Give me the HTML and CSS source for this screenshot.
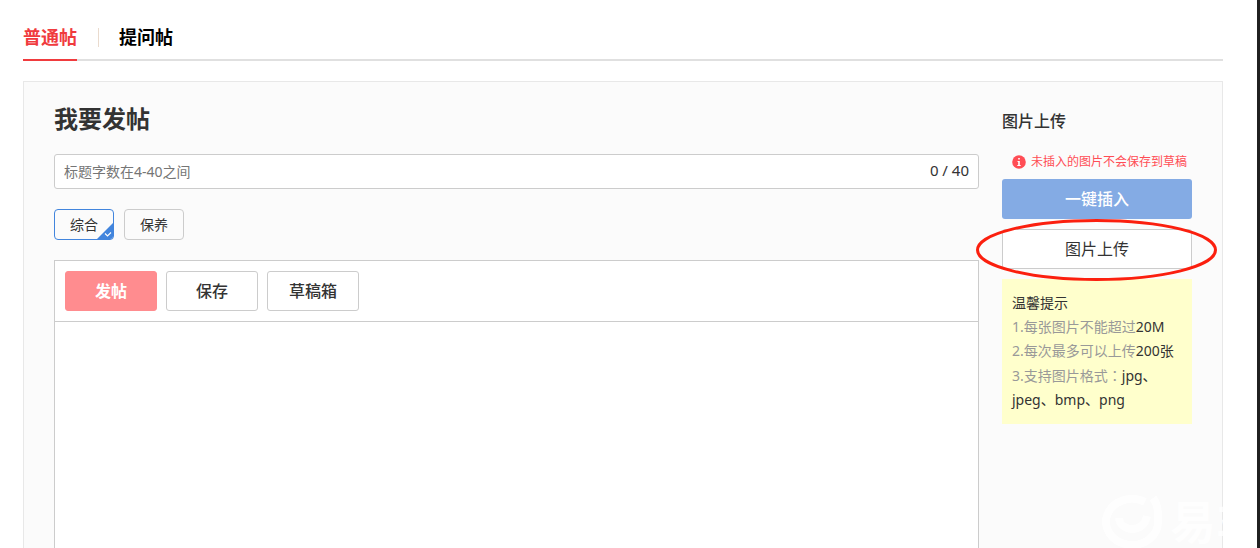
FILE: index.html
```html
<!DOCTYPE html>
<html lang="zh-CN">
<head>
<meta charset="utf-8">
<title>我要发帖</title>
<link rel="stylesheet" href="styles.css">
</head>
<body>
<div class="page">
  <nav class="tabs">
    <a class="tab tab-active" href="#post">普通帖</a>
    <span class="tab-divider"></span>
    <a class="tab" href="#question">提问帖</a>
  </nav>
  <main class="panel" id="post">
    <section class="compose">
      <h1 class="compose-title">我要发帖</h1>
      <div class="title-field">
        <input class="title-input" type="text" maxlength="40" aria-label="标题" placeholder="标题字数在4-40之间">
        <span class="title-count">0 / 40</span>
      </div>
      <div class="tags">
        <button class="tag tag-selected" type="button" aria-pressed="true">综合
          <svg class="tag-check" viewBox="0 0 18 18" aria-hidden="true"><path d="M18 0V18H0Z" fill="#4285dd"/><path d="M9 11.500L11.500 14L15 10.500" fill="none" stroke="#fff" stroke-width="1.100"/></svg>
        </button>
        <button class="tag" type="button" aria-pressed="false">保养</button>
      </div>
      <div class="editor">
        <div class="toolbar">
          <button class="action action-primary" type="button">发帖</button>
          <button class="action" type="button">保存</button>
          <button class="action" type="button">草稿箱</button>
        </div>
        <textarea class="editor-body" aria-label="正文"></textarea>
      </div>
    </section>
    <aside class="upload">
      <h2 class="upload-title">图片上传</h2>
      <p class="notice">
        <svg class="notice-icon" viewBox="0 0 14 14" aria-hidden="true"><circle cx="7" cy="7" r="6.800" fill="#ff4d55"/><path d="M6.200 3H7.800V4.600H6.200ZM5.500 6H7.800V10H8.700V11H5.300V10H6.200V7H5.500Z" fill="#fff"/></svg>
        <span>未插入的图片不会保存到草稿</span>
      </p>
      <button class="wide-button insert-button" type="button">一键插入</button>
      <div class="upload-wrap">
        <button class="wide-button upload-button" type="button">图片上传</button>
        <svg class="highlight" viewBox="0 0 241 62" aria-hidden="true"><ellipse cx="120.500" cy="31" rx="119" ry="29.500" fill="none" stroke="#fb1f0e" stroke-width="3"/></svg>
      </div>
      <div class="tips">
        <strong class="tips-title">温馨提示</strong>
        <ol class="tips-list">
          <li>1.每张图片不能超过<em>20M</em></li>
          <li>2.每次最多可以上传<em>200张</em></li>
          <li>3.支持图片格式<span class="colon" lang="zh-TW">：</span><em>jpg、jpeg、bmp、png</em></li>
        </ol>
      </div>
    </aside>
  </main>
  <div class="watermark" aria-hidden="true">
    <svg class="watermark-logo" viewBox="0 0 62 54"><path d="M43 8A26 23 0 1 0 56 27Q57 12 51 4" fill="none" stroke="#fff" stroke-width="8"/><path d="M17 24C18 38 42 40 45 22" fill="none" stroke="#fff" stroke-width="8"/></svg>
    <span class="watermark-text">易车</span>
  </div>
</div>
</body>
</html>
```
FILE: styles.css
```css
* {
  box-sizing: border-box;
}

body {
  margin: 0;
  font-family: "Noto Sans", "Noto Sans CJK SC", sans-serif;
  font-size: 14px;
  line-height: 24px;
  color: #333;
  background: #fff;
}

button,
input,
textarea {
  font: inherit;
  color: inherit;
}

button {
  padding: 0;
  cursor: pointer;
}

.page {
  position: relative;
  display: flex;
  flex-direction: column;
  height: 100vh;
  padding: 14px 34px 0 23px;
  overflow: hidden;
  border-right: 3px solid #202020;
}

.tabs {
  display: flex;
  align-items: flex-start;
  height: 47px;
  border-bottom: 2px solid #e0e0e0;
}

.tab {
  height: 47px;
  font-size: 18px;
  font-weight: 700;
  line-height: 46px;
  color: #000;
  text-decoration: none;
}

.tab-active {
  color: #f03b3e;
  border-bottom: 2px solid #f03b3e;
}

.tab-divider {
  width: 1px;
  height: 19px;
  margin: 14px 20px 0 21px;
  background: #eadbce;
}

.panel {
  display: flex;
  flex: 1;
  gap: 23px;
  min-height: 0;
  margin-top: 20px;
  padding: 0 30px;
  background: #fbfbfb;
  border: 1px solid #e8e8e8;
  border-bottom: 0;
}

.compose {
  display: flex;
  flex: 1;
  flex-direction: column;
  min-width: 0;
}

.compose-title {
  margin: 19px 0 17px;
  font-size: 24px;
  line-height: 36px;
}

.title-field {
  display: flex;
  flex: none;
  align-items: center;
  height: 35px;
  padding: 0 9px;
  background: #fff;
  border: 1px solid #ccc;
  border-radius: 3px;
}

.title-input {
  flex: 1;
  min-width: 0;
  padding: 0;
  background: none;
  border: 0;
  outline: 0;
}

.title-input::placeholder {
  color: #757575;
}

.title-count {
  padding-bottom: 3px;
  font-size: 15px;
}

.tags {
  display: flex;
  gap: 10px;
  margin: 20px 0;
}

.tag {
  position: relative;
  width: 60px;
  height: 31px;
  background: #fbfbfb;
  border: 1px solid #ccc;
  border-radius: 4px;
}

.tag-selected {
  overflow: hidden;
  border-color: #4285dd;
}

.tag-check {
  position: absolute;
  right: -1px;
  bottom: -1px;
  width: 18px;
  height: 18px;
}

.editor {
  display: flex;
  flex: 1;
  flex-direction: column;
  background: #fff;
  border: 1px solid #ccc;
  border-bottom: 0;
}

.toolbar {
  display: flex;
  gap: 9px;
  padding: 10px;
  border-bottom: 1px solid #ccc;
}

.action {
  width: 92px;
  height: 40px;
  font-size: 16px;
  font-weight: 500;
  background: #fff;
  border: 1px solid #ccc;
  border-radius: 3px;
}

.action-primary {
  font-weight: 700;
  color: #fff;
  background: #ff8c8f;
  border-color: #ff8c8f;
}

.editor-body {
  flex: 1;
  padding: 10px;
  resize: none;
  background: none;
  border: 0;
  outline: 0;
}

.upload {
  width: 190px;
}

.upload-title {
  margin: 27px 0 17px;
  font-size: 16px;
  font-weight: 500;
  line-height: 24px;
}

.notice {
  display: flex;
  gap: 5px;
  align-items: center;
  justify-content: flex-end;
  margin: 0 0 5px;
  padding-right: 5px;
  font-size: 12px;
  color: #ff4d55;
  white-space: nowrap;
}

.notice-icon {
  width: 14px;
  height: 14px;
}

.wide-button {
  display: block;
  width: 100%;
  height: 40px;
  font-size: 16px;
  border-radius: 3px;
}

.insert-button {
  font-weight: 500;
  color: #fff;
  background: #84abe4;
  border: 0;
}

.upload-wrap {
  position: relative;
  margin: 10px 0;
}

.upload-button {
  background: #fff;
  border: 1px solid #ccc;
}

.highlight {
  position: absolute;
  top: -10px;
  left: -26px;
  width: 241px;
  height: 62px;
  pointer-events: none;
}

.tips {
  padding: 12px 10px;
  background: #ffc;
}

.tips-title {
  display: block;
  font-weight: 400;
}

.tips-list {
  margin: 0;
  padding: 0;
  color: #999;
  list-style: none;
}

.tips-list em {
  font-style: normal;
  color: #333;
}

.colon {
  font-family: "Noto Sans CJK TC", sans-serif;
}

.watermark {
  position: absolute;
  right: -3px;
  bottom: 0;
  display: flex;
  gap: 6px;
  width: 158px;
  height: 54px;
  overflow: hidden;
  opacity: 0.8;
  pointer-events: none;
}

.watermark-logo {
  flex: none;
  width: 62px;
  height: 54px;
}

.watermark-text {
  flex: none;
  font-size: 46px;
  font-weight: 700;
  line-height: 54px;
  color: #fff;
}
```
